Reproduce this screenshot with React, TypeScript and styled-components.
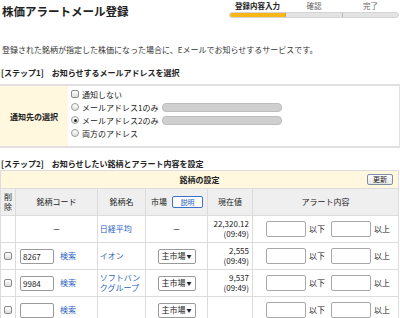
import React from 'react';
import styled, { createGlobalStyle } from 'styled-components';

const GlobalStyle = createGlobalStyle`
	body {
		margin: 0;
		font-family: 'Noto Sans CJK JP', 'Noto Sans', sans-serif;
		font-size: 8px;
		color: #333;
		background: #fff;
	}
`;

const Page = styled.div`
	width: 400px;
	height: 318px;
	overflow: hidden;
`;

const Header = styled.div`
	display: flex;
	justify-content: space-between;
	align-items: flex-start;
	height: 22px;
`;

const Title = styled.h1`
	margin: 3px 0 0 2px;
	font-size: 11.5px;
	line-height: 16px;
	font-weight: bold;
	color: #222;
`;

const Steps = styled.div`
	width: 170px;
	margin: 1px 1px 0 0;
`;

const StepLabels = styled.div`
	display: grid;
	grid-template-columns: 57px 56px 57px;
	text-align: center;
	line-height: 10px;
	font-size: 7.5px;
	color: #666;
`;

const StepLabel = styled.span<{ $active?: boolean }>`
	font-weight: ${(p) => (p.$active ? 'bold' : 'normal')};
	color: ${(p) => (p.$active ? '#222' : '#666')};
`;

const StepBar = styled.div`
	display: flex;
	height: 4px;
	margin-top: 1px;
	border-radius: 3px;
	overflow: hidden;
	border: 1px solid #d4d4d4;
	background: #e3e3e3;
`;

const StepSeg = styled.div<{ $on?: boolean }>`
	flex: 1;
	background: ${(p) => (p.$on ? '#f8b619' : '#e3e3e3')};
	border-right: 1px solid ${(p) => (p.$on ? '#e0a010' : '#b8b8b8')};
	&:last-child {
		border-right: none;
	}
`;

const Lead = styled.p`
	margin: 23px 0 0 2px;
	line-height: 10px;
`;

const StepTitle = styled.h2<{ $top: number }>`
	margin: ${(p) => p.$top}px 0 0 1px;
	font-size: 8px;
	line-height: 10px;
	font-weight: bold;
	color: #222;
`;

const SelectTable = styled.div`
	display: grid;
	grid-template-columns: 68px 1fr;
	width: 399px;
	margin-top: 6px;
	border-top: 2px solid #e0e0e0;
	border-bottom: 2px solid #e0e0e0;
	border-right: 1px solid #e0e0e0;
	height: 60px;
`;

const SelectHead = styled.div`
	display: flex;
	align-items: center;
	justify-content: center;
	background: #fff8df;
	font-weight: bold;
	color: #222;
`;

const Options = styled.div`
	display: flex;
	flex-direction: column;
	padding: 2px 0 0 3px;
	gap: 1px;
`;

const Option = styled.label`
	display: flex;
	align-items: center;
	height: 12px;
	gap: 3px;
	color: #222;
`;

const Check = styled.input`
	appearance: none;
	margin: 0;
	width: 8px;
	height: 8px;
	border: 1px solid #8a8a8a;
	border-radius: 2px;
	background: linear-gradient(#fff, #dcdcdc);
`;

const Radio = styled.input`
	appearance: none;
	margin: 0;
	width: 8px;
	height: 8px;
	border: 1px solid #999;
	border-radius: 50%;
	background: linear-gradient(#fff, #e0e0e0);
	position: relative;
	&:checked::after {
		content: '';
		position: absolute;
		left: 1.5px;
		top: 1.5px;
		width: 3px;
		height: 3px;
		border-radius: 50%;
		background: #222;
	}
`;

const Masked = styled.span`
	display: inline-block;
	width: 118px;
	height: 7px;
	margin-left: 1px;
	border-radius: 4px;
	background: #cfcfcf;
	border: 1px solid #bdbdbd;
`;

const StockTable = styled.table`
	width: 399px;
	margin-top: 1px;
	border-collapse: collapse;
	table-layout: fixed;
	td,
	th {
		border: 1px solid #dcdcdc;
		padding: 0;
		line-height: 10px;
	}
`;

const SetHead = styled.th`
	height: 17px;
	background: #fff8df;
	font-weight: bold;
	color: #222;
`;

const SetHeadInner = styled.div`
	display: grid;
	grid-template-columns: 1fr auto 1fr;
	align-items: center;
`;

const SmallButton = styled.button`
	justify-self: end;
	margin-right: 5px;
	height: 11px;
	width: 26px;
	padding: 0;
	font-family: inherit;
	font-size: 7px;
	line-height: 9px;
	color: #222;
	border: 1px solid #7d8fa8;
	border-radius: 2px;
	background: linear-gradient(#fff, #e6e6e6);
`;

const ColHead = styled.th<{ $align?: string }>`
	height: 26px;
	background: #efefef;
	font-weight: normal;
	color: #222;
	text-align: ${(p) => p.$align || 'center'};
`;

const MarketHead = styled.div`
	display: flex;
	align-items: center;
	gap: 5px;
	padding-left: 5px;
`;

const InfoButton = styled.span`
	display: inline-block;
	width: 29px;
	height: 10px;
	line-height: 10px;
	text-align: center;
	font-size: 7px;
	color: #2a5fbf;
	background: #fff;
	border: 1px solid #3c6fc8;
	border-radius: 2px;
`;

const Cell = styled.td<{ $align?: string; $h?: number }>`
	height: ${(p) => p.$h || 26}px;
	text-align: ${(p) => p.$align || 'left'};
	vertical-align: middle;
	color: #222;
`;

const Link = styled.a`
	color: #2a5fbf;
	text-decoration: none;
`;

const CodeCell = styled.div`
	display: flex;
	align-items: center;
	gap: 6px;
	padding-left: 4px;
`;

const CodeInput = styled.input`
	box-sizing: border-box;
	width: 34px;
	height: 15px;
	padding: 0 2px;
	font-family: inherit;
	font-size: 8px;
	border: 1px solid #9a9a9a;
	border-radius: 2px;
	color: #222;
`;

const Market = styled.div`
	display: flex;
	justify-content: center;
`;

const SelectBox = styled.span`
	display: inline-flex;
	align-items: center;
	justify-content: space-between;
	box-sizing: border-box;
	width: 38px;
	height: 15px;
	padding: 0 3px;
	border: 1px solid #9a9a9a;
	border-radius: 2px;
	background: #fff;
	color: #222;
`;

const Arrow = styled.span`
	font-size: 5px;
`;

const Price = styled.div`
	padding-right: 3px;
	text-align: right;
	line-height: 10px;
`;

const Alert = styled.div`
	display: flex;
	align-items: center;
	padding-left: 13px;
	gap: 3px;
`;

const AlertInput = styled.input`
	box-sizing: border-box;
	width: 40px;
	height: 16px;
	border: 1px solid #a8a8a8;
	border-radius: 2px;
	background: #fff;
`;

const AlertUnit = styled.span`
	margin-right: 3px;
`;

const RowCheck = styled(Check)`
	display: block;
	margin: 0 auto;
`;

type Stock = {
	code: string;
	name: string[];
	price: string;
	time: string;
	h: number;
};

const stocks: Stock[] = [
	{ code: '8267', name: ['イオン'], price: '2,555', time: '(09:49)', h: 25 },
	{ code: '9984', name: ['ソフトバン', 'クグループ'], price: '9,537', time: '(09:49)', h: 26 },
	{ code: '', name: [], price: '', time: '', h: 24 },
];

const AlertFields: React.FC = () => (
	<Alert>
		<AlertInput />
		<AlertUnit>以下</AlertUnit>
		<AlertInput />
		<span>以上</span>
	</Alert>
);

const App: React.FC = () => {
	return (
		<Page>
			<GlobalStyle />
			<Header>
				<Title>株価アラートメール登録</Title>
				<Steps>
					<StepLabels>
						<StepLabel $active>登録内容入力</StepLabel>
						<StepLabel>確認</StepLabel>
						<StepLabel>完了</StepLabel>
					</StepLabels>
					<StepBar>
						<StepSeg $on />
						<StepSeg />
						<StepSeg />
					</StepBar>
				</Steps>
			</Header>

			<Lead>登録された銘柄が指定した株価になった場合に、Eメールでお知らせするサービスです。</Lead>

			<StepTitle $top={13}>[ステップ1]　お知らせするメールアドレスを選択</StepTitle>
			<SelectTable>
				<SelectHead>通知先の選択</SelectHead>
				<Options>
					<Option>
						<Check type='checkbox' />
						通知しない
					</Option>
					<Option>
						<Radio type='radio' name='addr' />
						メールアドレス1のみ
						<Masked />
					</Option>
					<Option>
						<Radio type='radio' name='addr' defaultChecked />
						メールアドレス2のみ
						<Masked />
					</Option>
					<Option>
						<Radio type='radio' name='addr' />
						両方のアドレス
					</Option>
				</Options>
			</SelectTable>

			<StepTitle $top={11}>[ステップ2]　お知らせしたい銘柄とアラート内容を設定</StepTitle>
			<StockTable>
				<colgroup>
					<col style={{ width: 15 }} />
					<col style={{ width: 82 }} />
					<col style={{ width: 48 }} />
					<col style={{ width: 62 }} />
					<col style={{ width: 45 }} />
					<col />
				</colgroup>
				<thead>
					<tr>
						<SetHead colSpan={6}>
							<SetHeadInner>
								<span />
								<span>銘柄の設定</span>
								<SmallButton type='button'>更新</SmallButton>
							</SetHeadInner>
						</SetHead>
					</tr>
					<tr>
						<ColHead>
							削<br />除
						</ColHead>
						<ColHead>銘柄コード</ColHead>
						<ColHead>銘柄名</ColHead>
						<ColHead $align='left'>
							<MarketHead>
								市場
								<InfoButton>説明</InfoButton>
							</MarketHead>
						</ColHead>
						<ColHead>現在値</ColHead>
						<ColHead>アラート内容</ColHead>
					</tr>
				</thead>
				<tbody>
					<tr>
						<Cell />
						<Cell $align='center'>－</Cell>
						<Cell>
							<Link href='#'>&nbsp;日経平均</Link>
						</Cell>
						<Cell $align='center'>－</Cell>
						<Cell>
							<Price>
								22,320.12
								<br />
								(09:49)
							</Price>
						</Cell>
						<Cell>
							<AlertFields />
						</Cell>
					</tr>
					{stocks.map((s, i) => (
						<tr key={i}>
							<Cell $h={s.h}>
								<RowCheck type='checkbox' />
							</Cell>
							<Cell>
								<CodeCell>
									<CodeInput defaultValue={s.code} />
									<Link href='#'>検索</Link>
								</CodeCell>
							</Cell>
							<Cell>
								<Link href='#'>
									{s.name.map((n, j) => (
										<React.Fragment key={j}>
											&nbsp;{n}
											{j < s.name.length - 1 && <br />}
										</React.Fragment>
									))}
								</Link>
							</Cell>
							<Cell>
								<Market>
									<SelectBox>
										主市場<Arrow>▼</Arrow>
									</SelectBox>
								</Market>
							</Cell>
							<Cell>
								{s.price && (
									<Price>
										{s.price}
										<br />
										{s.time}
									</Price>
								)}
							</Cell>
							<Cell>
								<AlertFields />
							</Cell>
						</tr>
					))}
				</tbody>
			</StockTable>
		</Page>
	);
};

export default App;
